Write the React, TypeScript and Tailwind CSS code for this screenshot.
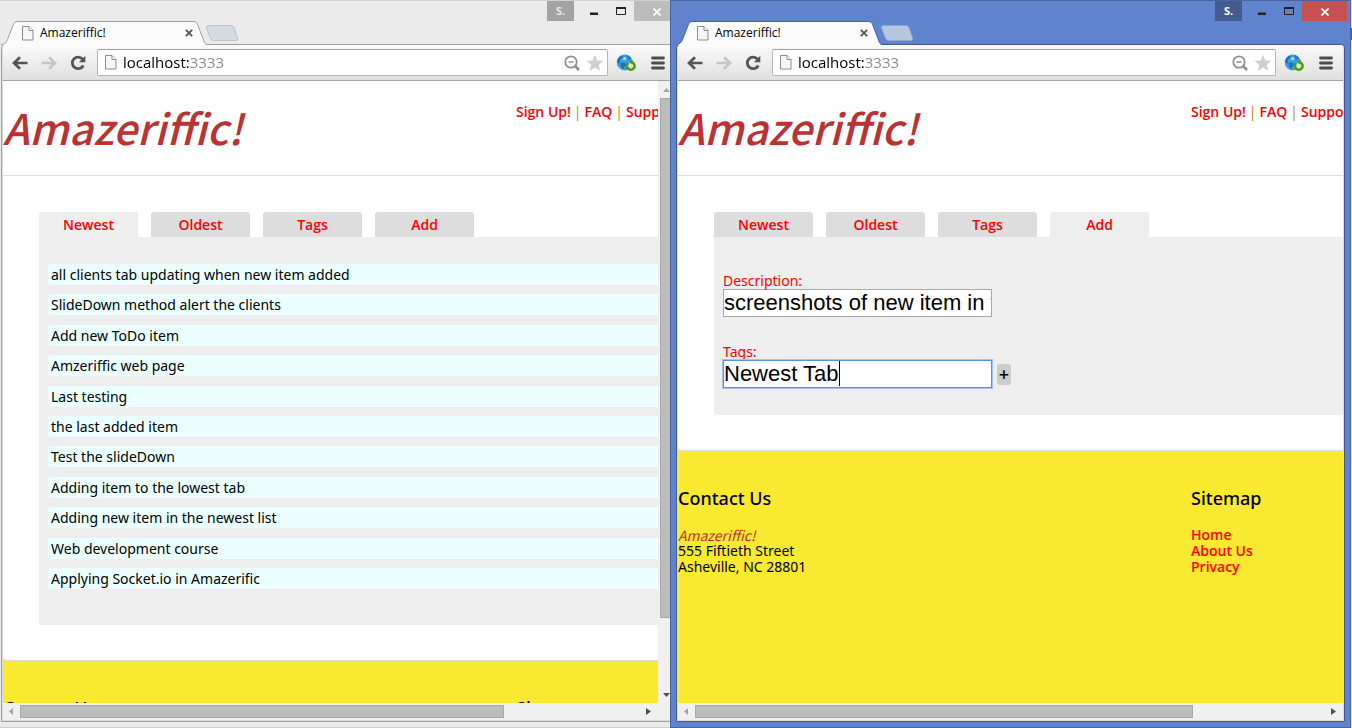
import { ReactNode, useState } from "react";
import clsx from "clsx";

type Theme = {
  frame: string;
  panel: string;
  stroke: string;
  newTab: string;
  newTabStroke: string;
  profile: string;
  profileText: string;
  close: string;
  thumb: string;
};

const inactive: Theme = {
  frame: "bg-[#ebebeb] border-[#d0d0d0]",
  panel: "border-[#a0a0a0]",
  stroke: "#a0a0a0",
  newTab: "#d5dae1",
  newTabStroke: "#bfc4ca",
  profile: "bg-[#a3a3a3]",
  profileText: "text-[#e6e6e6]",
  close: "bg-[#bcbcbc]",
  thumb: "w-[78%]",
};

const active: Theme = {
  frame: "bg-[#5f83cd] border-[#4a64a1]",
  panel: "border-[#41598f]",
  stroke: "#46619f",
  newTab: "#b7c6df",
  newTabStroke: "#8fa5d2",
  profile: "bg-[#435b8f]",
  profileText: "text-white",
  close: "bg-[#c75050]",
  thumb: "w-[79%]",
};

function PageIcon() {
  return (
    <svg width="12" height="15" viewBox="0 0 12 15" className="shrink-0" aria-hidden="true">
      <path d="M.5.5h6.5l4 4v9.5H.5z" fill="#f6f6f6" stroke="#8c8c8c" />
      <path d="M7 .5v4h4" fill="#fff" stroke="#8c8c8c" />
    </svg>
  );
}

function BackIcon({ color }: { color: string }) {
  return (
    <svg width="16" height="14" viewBox="0 0 16 14" aria-hidden="true">
      <path d="M8 1.3 2 7l6 5.700M2.500 7H15.500" fill="none" stroke={color} strokeWidth="2.700" />
    </svg>
  );
}

function ReloadIcon() {
  return (
    <svg width="16" height="16" viewBox="0 0 16 16" aria-hidden="true">
      <path d="M12.600 4.200A5.800 5.800 0 1 0 13.300 10.500" fill="none" stroke="#555" strokeWidth="2.800" />
      <path d="M15.300.8v6.500H8.800z" fill="#555" />
    </svg>
  );
}

function ZoomIcon() {
  return (
    <svg width="16" height="16" viewBox="0 0 16 16" aria-hidden="true">
      <circle cx="7" cy="7" r="5.700" fill="none" stroke="#8f8f8f" strokeWidth="1.800" />
      <path d="M4.500 7h5" stroke="#8f8f8f" strokeWidth="1.500" />
      <path d="m11 11 4 4" stroke="#8f8f8f" strokeWidth="2.600" />
    </svg>
  );
}

function StarIcon() {
  return (
    <svg width="18" height="18" viewBox="0 0 18 18" aria-hidden="true">
      <path d="m9 .6 2.300 5.800 6.200.4-4.800 4 1.600 6.200L9 13.600 3.700 17l1.600-6.200-4.800-4 6.200-.4z" fill="#cfcfcf" />
    </svg>
  );
}

function GlobeIcon() {
  return (
    <svg width="20" height="18" viewBox="0 0 20 18" aria-hidden="true">
      <circle cx="8.700" cy="8.500" r="7.900" fill="#3a9fdb" />
      <path d="M1 8a8 8 0 0 1 4-6.200l2 .7L5.500 4.500 3.500 6 4.500 8 3 9.500z" fill="#1673b5" />
      <path d="M10 1c2.500.3 4.500 1.500 5.500 3.500L13 6l-2-1.500z" fill="#1f83c4" />
      <path d="m4.500 9 3.500-.5 2 1.500-1.500 3L6.500 15.500 5 12.500z" fill="#1a76b8" />
      <path d="M6.500 5.500 8.500 3l2 .5L9.500 6.500z" fill="#a6dcf3" />
      <circle cx="14.800" cy="11.800" r="2.800" fill="#d9ecc6" />
      <path d="M12 9.300a3.800 3.800 0 1 0 4-1" fill="none" stroke="#4f9a12" strokeWidth="2.400" />
      <path d="m16.800 5.800-.5 4.800-3.300-2.600z" fill="#4f9a12" />
    </svg>
  );
}

function MenuIcon() {
  return (
    <svg width="14" height="14" viewBox="0 0 14 14" aria-hidden="true">
      <path d="M1.500 2h11M1.500 7h11M1.500 12h11" stroke="#4c4c4c" strokeWidth="2.800" strokeLinecap="round" />
    </svg>
  );
}

function TitleBar({ theme }: { theme: Theme }) {
  return (
    <div className="flex h-[43px] shrink-0 items-start justify-between">
      <div className="flex h-full items-end">
        <div className="relative z-10 -mb-px flex h-6 w-[206px] items-center pl-[21px] pr-3.5">
          <svg className="absolute inset-0" width="206" height="24" viewBox="0 0 206 24" aria-hidden="true">
            <path
              d="M0 23.500C4 23.500 5.500 21 6.500 18.500L12 4.500C13 1.500 14 .5 17 .5H192C195 .5 196 1.500 197 4.500L202.500 19C203.500 22 204.500 23.500 206 23.500V24H0z"
              fill="#fbfbfb"
            />
            <path
              d="M0 23.500C4 23.500 5.500 21 6.500 18.500L12 4.500C13 1.500 14 .5 17 .5H192C195 .5 196 1.500 197 4.500L202.500 19C203.500 22 204.500 23.500 206 23.500"
              fill="none"
              stroke={theme.stroke}
            />
          </svg>
          <div className="relative flex grow items-center gap-1.5">
            <PageIcon />
            <span className="grow font-['Open_Sans',sans-serif] text-[12px] leading-4 text-black">Amazeriffic!</span>
            <button type="button" aria-label="Close tab" className="flex">
              <svg width="8" height="8" viewBox="0 0 8 8" aria-hidden="true">
                <path d="m.8.8 6.400 6.400M7.200.8.8 7.200" stroke="#555" strokeWidth="1.800" />
              </svg>
            </button>
          </div>
        </div>
        <button type="button" aria-label="New tab" className="-ml-0.5 mb-[3px]">
          <svg width="34" height="16" viewBox="0 0 34 16" className="block" aria-hidden="true">
            <path
              d="M4 .5H25.500C27.500.5 28.500 1.500 29.200 3L32.500 12.500C33 14.500 32.500 15.500 30.500 15.500H9C7 15.500 6 14.500 5.300 13L1.500 3C1 1.200 2 .5 4 .5z"
              fill={theme.newTab}
              stroke={theme.newTabStroke}
            />
          </svg>
        </button>
      </div>
      <div className="-mr-0.5 flex h-5 shrink-0">
        <button
          type="button"
          className={clsx("w-[27px] font-['Open_Sans',sans-serif] text-[11px] font-bold leading-5", theme.profile, theme.profileText)}
        >
          S.
        </button>
        <button type="button" aria-label="Minimize" className="ml-2 flex w-6 items-center justify-center pt-[5px]">
          <svg width="8" height="3" aria-hidden="true">
            <path d="M0 .5h8v2.500H0z" fill="#222" />
          </svg>
        </button>
        <button type="button" aria-label="Maximize" className="flex w-7 items-center justify-center pl-0.5">
          <svg width="10" height="8" aria-hidden="true">
            <path d="M.5 1h9v6.500h-9z" fill="none" stroke="#222" />
            <path d="M0 1h10" stroke="#222" strokeWidth="2" />
          </svg>
        </button>
        <button type="button" aria-label="Close" className={clsx("flex w-[45px] items-center justify-center pt-0.5", theme.close)}>
          <svg width="8" height="8" viewBox="0 0 8 8" aria-hidden="true">
            <path d="m.5.5 7 7M7.500.5l-7 7" stroke="#fff" strokeWidth="1.700" />
          </svg>
        </button>
      </div>
    </div>
  );
}

function Toolbar() {
  const [address, setAddress] = useState("localhost:3333");
  return (
    <div className="flex h-9 shrink-0 items-center border-b border-[#a5a5a5] bg-linear-to-b from-[#fbfbfb] to-[#dfdfdf] pl-[9px] pr-2.5">
      <div className="flex items-center gap-[13px]">
        <button type="button" aria-label="Back">
          <BackIcon color="#555" />
        </button>
        <button type="button" aria-label="Forward" className="-scale-x-100">
          <BackIcon color="#c6c6c6" />
        </button>
        <button type="button" aria-label="Reload">
          <ReloadIcon />
        </button>
      </div>
      <div className="ml-[11px] flex h-[27px] min-w-0 grow items-center rounded-xs border border-[#b5b5b5] border-t-[#a0a0a0] bg-white pl-[7px] pr-[3px]">
        <PageIcon />
        <input
          aria-label="Address"
          value={address}
          onChange={(e) => setAddress(e.target.value)}
          className="ml-1.5 h-[22px] min-w-0 grow bg-linear-to-r from-black from-[66px] to-[#888] to-[66px] bg-clip-text pb-0.5 font-['Open_Sans',sans-serif] text-[15px] leading-5 text-transparent outline-none"
        />
        <button type="button" aria-label="Zoom">
          <ZoomIcon />
        </button>
        <button type="button" aria-label="Bookmark" className="ml-1.5">
          <StarIcon />
        </button>
      </div>
      <button type="button" aria-label="Extension" className="ml-2">
        <GlobeIcon />
      </button>
      <button type="button" aria-label="Menu" className="ml-[15px]">
        <MenuIcon />
      </button>
    </div>
  );
}

function HorizontalScroll({ thumb }: { thumb: string }) {
  return (
    <div className="flex h-[17px] shrink-0 items-center justify-between bg-[#f0f0f0]">
      <svg width="17" height="17" className="shrink-0" aria-hidden="true">
        <path d="M10 5v7L6 8.500z" fill="#a3a3a3" />
      </svg>
      <div className="h-[13px] grow">
        <div className={clsx("h-full border border-[#a8a8a8] bg-[#bcbcbc]", thumb)} />
      </div>
      <svg width="17" height="17" className="shrink-0" aria-hidden="true">
        <path d="M5 5v7l5-3.500z" fill="#505050" />
      </svg>
    </div>
  );
}

function VerticalScroll() {
  return (
    <div className="flex w-[17px] shrink-0 flex-col items-center bg-[#f0f0f0]">
      <svg width="17" height="17" className="shrink-0" aria-hidden="true">
        <path d="M5 11h7L8.500 7z" fill="#a3a3a3" />
      </svg>
      <div className="w-[13px] grow">
        <div className="h-[88.5%] border border-[#a8a8a8] bg-[#bcbcbc]" />
      </div>
      <svg width="17" height="17" className="shrink-0" aria-hidden="true">
        <path d="M5 7h7l-3.500 4z" fill="#505050" />
      </svg>
    </div>
  );
}

function BrowserWindow({ theme, vertical, children }: { theme: Theme; vertical?: boolean; children: ReactNode }) {
  return (
    <div className={clsx("flex h-full flex-col border px-[5px] pb-[5px]", theme.frame)}>
      <TitleBar theme={theme} />
      <div className={clsx("flex min-h-0 grow flex-col overflow-hidden rounded-t border", theme.panel)}>
        <div className="flex min-h-0 grow flex-col border-x border-b border-[#dcdcdc]">
          <Toolbar />
          <div className="flex min-h-0 grow">
            <div className="flex min-w-0 grow flex-col">
              <div className="min-h-0 grow overflow-hidden bg-[#f9e931]">{children}</div>
              <HorizontalScroll thumb={theme.thumb} />
            </div>
            {vertical && (
              <div className="flex flex-col">
                <div className="flex min-h-0 grow">
                  <VerticalScroll />
                </div>
                <div className="h-[17px] bg-[#f0f0f0]" />
              </div>
            )}
          </div>
        </div>
      </div>
    </div>
  );
}

const tabs = ["Newest", "Oldest", "Tags", "Add"];

const items = [
  "all clients tab updating when new item added",
  "SlideDown method alert the clients",
  "Add new ToDo item",
  "Amzeriffic web page",
  "Last testing",
  "the last added item",
  "Test the slideDown",
  "Adding item to the lowest tab",
  "Adding new item in the newest list",
  "Web development course",
  "Applying Socket.io in Amazerific",
];

function Site({ selected, children }: { selected: string; children: ReactNode }) {
  return (
    <div className="w-[843px] font-['Noto_Sans','Open_Sans',sans-serif] text-[14px] leading-4 text-black">
      <div className="rounded-b border-b border-[#ddd] bg-white">
        <header className="grid h-[95px] grid-cols-[513px_1fr] border-b border-[#ddd]">
          <h1 className="pt-5 font-['Noto_Sans_CJK_SC',sans-serif] text-[42px] font-medium italic leading-[52px] text-[#b93234]">
            Amazeriffic!
          </h1>
          <nav className="flex gap-[3px] whitespace-nowrap pt-[23px] font-['Open_Sans',sans-serif] font-semibold text-[#f00]">
            <a href="#signup">Sign Up!</a>
            <span className="font-normal text-[#b8860b]">|</span>
            <a href="#faq">FAQ</a>
            <span className="font-normal text-[#b8860b]">|</span>
            <a href="#support">Support</a>
          </nav>
        </header>
        <main className="px-9 pb-[35px] pt-9">
          <div className="flex gap-[13px]">
            {tabs.map((tab) => (
              <a
                key={tab}
                href={"#" + tab.toLowerCase()}
                className={clsx(
                  "h-[25px] w-[99px] rounded-t-[3px] text-center font-['Open_Sans',sans-serif] font-semibold leading-[26px] text-[#f00]",
                  tab === selected ? "bg-[#eee]" : "bg-[#ddd]",
                )}
              >
                {tab}
              </a>
            ))}
          </div>
          <div className="rounded-b-[3px] bg-[#eee] px-[9px]">{children}</div>
        </main>
      </div>
      <footer className="grid grid-cols-[513px_1fr] bg-[#f9e931] pb-9 pt-[35px]">
        <div>
          <h3 className="mb-[17px] text-[18px] font-medium leading-6">Contact Us</h3>
          <p className="font-['Noto_Sans_CJK_SC',sans-serif] italic text-[#b93234]">Amazeriffic!</p>
          <p>555 Fiftieth Street</p>
          <p>Asheville, NC 28801</p>
        </div>
        <div>
          <h3 className="mb-[17px] text-[18px] font-medium leading-6">Sitemap</h3>
          <ul className="font-['Open_Sans',sans-serif] font-semibold text-[#f00]">
            <li><a href="#home">Home</a></li>
            <li><a href="#about">About Us</a></li>
            <li><a href="#privacy">Privacy</a></li>
          </ul>
        </div>
      </footer>
    </div>
  );
}

function ItemList() {
  return (
    <div className="pb-9 pt-[27px]">
      <ul className="flex h-[325px] flex-col justify-between">
        {items.map((item) => (
          <li key={item} className="h-[21px] rounded-[3px] bg-[#ebffff] pl-[3px] leading-[21px]">
            {item}
          </li>
        ))}
      </ul>
    </div>
  );
}

function AddForm() {
  const [description, setDescription] = useState("screenshots of new item in the newest tab");
  const [tags, setTags] = useState("Newest Tab");
  const field =
    "block h-7 w-[269px] border bg-white p-0 font-['Liberation_Sans',Arial,sans-serif] text-[22px] leading-6 text-black outline-none";
  return (
    <form className="pb-[27px] pt-9" onSubmit={(e) => e.preventDefault()}>
      <label htmlFor="description" className="block text-[#f00]">Description:</label>
      <input
        id="description"
        value={description}
        onChange={(e) => setDescription(e.target.value)}
        className={clsx(field, "border-[#a9a9a9]")}
      />
      <label htmlFor="tags" className="mt-[27px] block text-[#f00]">Tags:</label>
      <div className="flex items-center gap-[5px]">
        <div className="relative">
          <input
            id="tags"
            value={tags}
            onChange={(e) => setTags(e.target.value)}
            className={clsx(field, "border-[#5e8fdc] shadow-[0_0_0_1px_#a4c3f4]")}
          />
          <span className="absolute left-[116px] top-px h-[25px] w-px bg-black" />
        </div>
        <button type="submit" className="h-[21px] w-3.5 rounded-[3px] bg-[#ccc] font-['Open_Sans',sans-serif] text-[18px] font-semibold leading-5">
          +
        </button>
      </div>
    </form>
  );
}

export default function App() {
  return (
    <div className="flex h-screen overflow-hidden">
      <div className="-ml-[5px] -mr-[13px] min-w-0 flex-[688_1_0%]">
        <BrowserWindow theme={inactive} vertical>
          <Site selected="Newest">
            <ItemList />
          </Site>
        </BrowserWindow>
      </div>
      <div className="z-10 min-w-0 flex-[681_1_0%]">
        <BrowserWindow theme={active}>
          <Site selected="Add">
            <AddForm />
          </Site>
        </BrowserWindow>
      </div>
      <div className="w-px bg-[#dde6f0] pt-7">
        <div className="h-3 bg-[#1f6fc0]" />
      </div>
    </div>
  );
}
